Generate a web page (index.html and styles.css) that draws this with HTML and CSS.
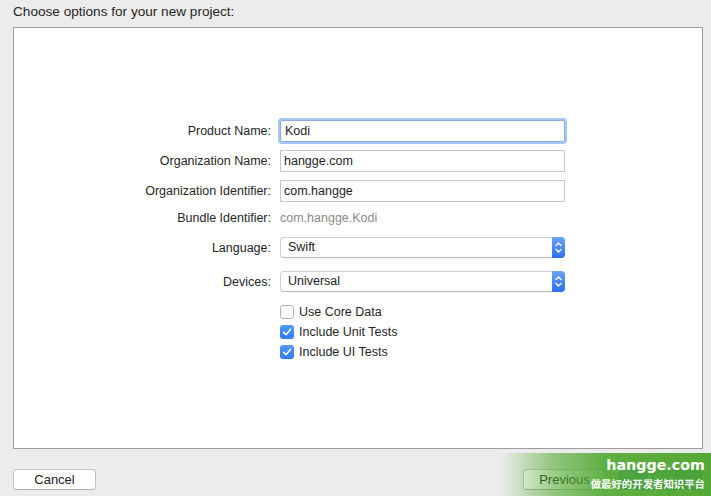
FILE: index.html
```html
<!DOCTYPE html>
<html>
<head>
<meta charset="utf-8">
<link rel="stylesheet" href="styles.css">
</head>
<body>
<div class="window">
  <div class="title">Choose options for your new project:</div>
  <div class="panel">
    <div class="form">
      <div class="row row-product">
        <div class="lbl">Product Name:</div>
        <div class="field focus">Kodi</div>
      </div>
      <div class="row row-text">
        <div class="lbl">Organization Name:</div>
        <div class="field">hangge.com</div>
      </div>
      <div class="row row-text">
        <div class="lbl">Organization Identifier:</div>
        <div class="field">com.hangge</div>
      </div>
      <div class="row row-bundle">
        <div class="lbl">Bundle Identifier:</div>
        <div class="value">com.hangge.Kodi</div>
      </div>
      <div class="row row-lang">
        <div class="lbl">Language:</div>
        <div class="popup">
          <span class="popup-text">Swift</span>
          <span class="popup-arrow">
            <svg width="13" height="21" viewBox="0 0 13 21"><path d="M4 8.5 L6.5 6 L9 8.5 M4 12.5 L6.5 15 L9 12.5" fill="none" stroke="#fff" stroke-width="1.4" stroke-linecap="round" stroke-linejoin="round"/></svg>
          </span>
        </div>
      </div>
      <div class="row row-dev">
        <div class="lbl">Devices:</div>
        <div class="popup">
          <span class="popup-text">Universal</span>
          <span class="popup-arrow">
            <svg width="13" height="21" viewBox="0 0 13 21"><path d="M4 8.5 L6.5 6 L9 8.5 M4 12.5 L6.5 15 L9 12.5" fill="none" stroke="#fff" stroke-width="1.4" stroke-linecap="round" stroke-linejoin="round"/></svg>
          </span>
        </div>
      </div>
      <div class="row row-check first">
        <div class="lbl"></div>
        <div class="check"><span class="box"></span><span class="check-label">Use Core Data</span></div>
      </div>
      <div class="row row-check">
        <div class="lbl"></div>
        <div class="check"><span class="box on"><svg width="14" height="14" viewBox="0 0 14 14"><path d="M3.6 7.4 L6 9.8 L10.6 4.2" fill="none" stroke="#fff" stroke-width="1.5" stroke-linecap="round" stroke-linejoin="round"/></svg></span><span class="check-label">Include Unit Tests</span></div>
      </div>
      <div class="row row-check">
        <div class="lbl"></div>
        <div class="check"><span class="box on"><svg width="14" height="14" viewBox="0 0 14 14"><path d="M3.6 7.4 L6 9.8 L10.6 4.2" fill="none" stroke="#fff" stroke-width="1.5" stroke-linecap="round" stroke-linejoin="round"/></svg></span><span class="check-label">Include UI Tests</span></div>
      </div>
    </div>
  </div>
  <div class="footer">
    <div class="btn">Cancel</div>
    <div class="spacer"></div>
    <div class="btn">Previous</div>
    <div class="btn next">Next</div>
  </div>
  <div class="watermark">
    <div class="wm-title">hangge.com</div>
    <div class="wm-sub">做最好的开发者知识平台</div>
  </div>
</div>
</body>
</html>
```

FILE: styles.css
```css
html, body {
  margin: 0;
  padding: 0;
  background: #ececec;
}
.window {
  position: relative;
  width: 711px;
  height: 496px;
  overflow: hidden;
  font-family: "Liberation Sans", Arial, sans-serif;
  color: #262626;
}
.title {
  padding: 4px 0 0 13px;
  height: 27px;
  line-height: 16px;
  font-size: 13.6px;
  box-sizing: border-box;
}
.panel {
  margin-left: 13px;
  width: 690px;
  height: 422px;
  box-sizing: border-box;
  background: #fff;
  border: 1px solid #9d9d9d;
  padding-top: 92px;
}
.form {
  display: flex;
  flex-direction: column;
}
.row {
  display: grid;
  grid-template-columns: 257px 285px;
  column-gap: 9px;
  align-items: center;
  font-size: 12.5px;
}
.lbl {
  text-align: right;
  white-space: nowrap;
}
.row-text { margin-top: 8px; }
.row-bundle { margin-top: 8px; height: 16px; }
.row-lang { margin-top: 11px; }
.row-dev { margin-top: 13px; }
.row-check { margin-top: 6px; }
.row-check.first { margin-top: 13px; }

.field {
  height: 22px;
  box-sizing: border-box;
  border: 1px solid #c6c6c6;
  padding-left: 3px;
  line-height: 20px;
  color: #1e1e1e;
}
.field.focus {
  border-color: #8aaee6;
  border-radius: 2px;
  box-shadow: 0 0 0 2px #a8c6f3;
  padding-left: 4px;
}
.value {
  color: #8a8a8a;
  padding-left: 0;
  line-height: 16px;
}
.popup {
  height: 21px;
  box-sizing: border-box;
  display: flex;
  border: 1px solid #cdcdcd;
  border-bottom-color: #b9b9b9;
  border-radius: 4px;
  background: #fff;
  box-shadow: 0 0.5px 0.5px rgba(0,0,0,0.06);
}
.popup-text {
  flex: 1;
  padding-left: 7px;
  line-height: 19px;
  color: #1e1e1e;
}
.popup-arrow {
  width: 13px;
  height: 21px;
  margin: -1px -1px -1px 0;
  border-radius: 0 4px 4px 0;
  background: linear-gradient(#68a5fc, #2f6ef5);
  display: flex;
}
.check {
  display: flex;
  align-items: center;
  height: 14px;
}
.box {
  width: 14px;
  height: 14px;
  box-sizing: border-box;
  border: 1px solid #b3b3b3;
  border-radius: 3px;
  background: #fff;
  display: flex;
}
.box.on {
  border: none;
  background: linear-gradient(#4f9cfd, #3079f6);
}
.check-label {
  margin-left: 5px;
  line-height: 14px;
  white-space: nowrap;
}
.footer {
  display: flex;
  margin-top: 20px;
  padding: 0 9px 0 13px;
  gap: 13px;
}
.spacer { flex: 1; }
.btn {
  width: 83px;
  height: 21px;
  box-sizing: border-box;
  border: 1px solid #c3c3c3;
  border-bottom-color: #acacac;
  border-radius: 4px;
  background: #fff;
  font-size: 13px;
  line-height: 19px;
  text-align: center;
  color: #222;
}
.btn.next {
  background: linear-gradient(#69a6fc, #2f6ff5);
  border-color: #3d7ef2;
  color: #fff;
}
.watermark {
  position: absolute;
  right: 0;
  bottom: 0;
  width: 211px;
  height: 43px;
  box-sizing: border-box;
  padding: 3px 6px 0 0;
  background: linear-gradient(to right, rgba(76,166,42,0) 0%, rgba(76,166,42,0.55) 25%, rgba(76,166,42,0.88) 50%, rgba(72,164,40,0.93) 100%);
  display: flex;
  flex-direction: column;
  align-items: flex-end;
  color: #fff;
}
.wm-title {
  font-family: "DejaVu Sans", "Liberation Sans", sans-serif;
  font-weight: bold;
  font-size: 14.3px;
  line-height: 19px;
}
.wm-sub {
  font-family: "Noto Sans CJK SC", sans-serif;
  font-weight: bold;
  font-size: 10.4px;
  line-height: 12px;
  margin-top: 3px;
}
```
